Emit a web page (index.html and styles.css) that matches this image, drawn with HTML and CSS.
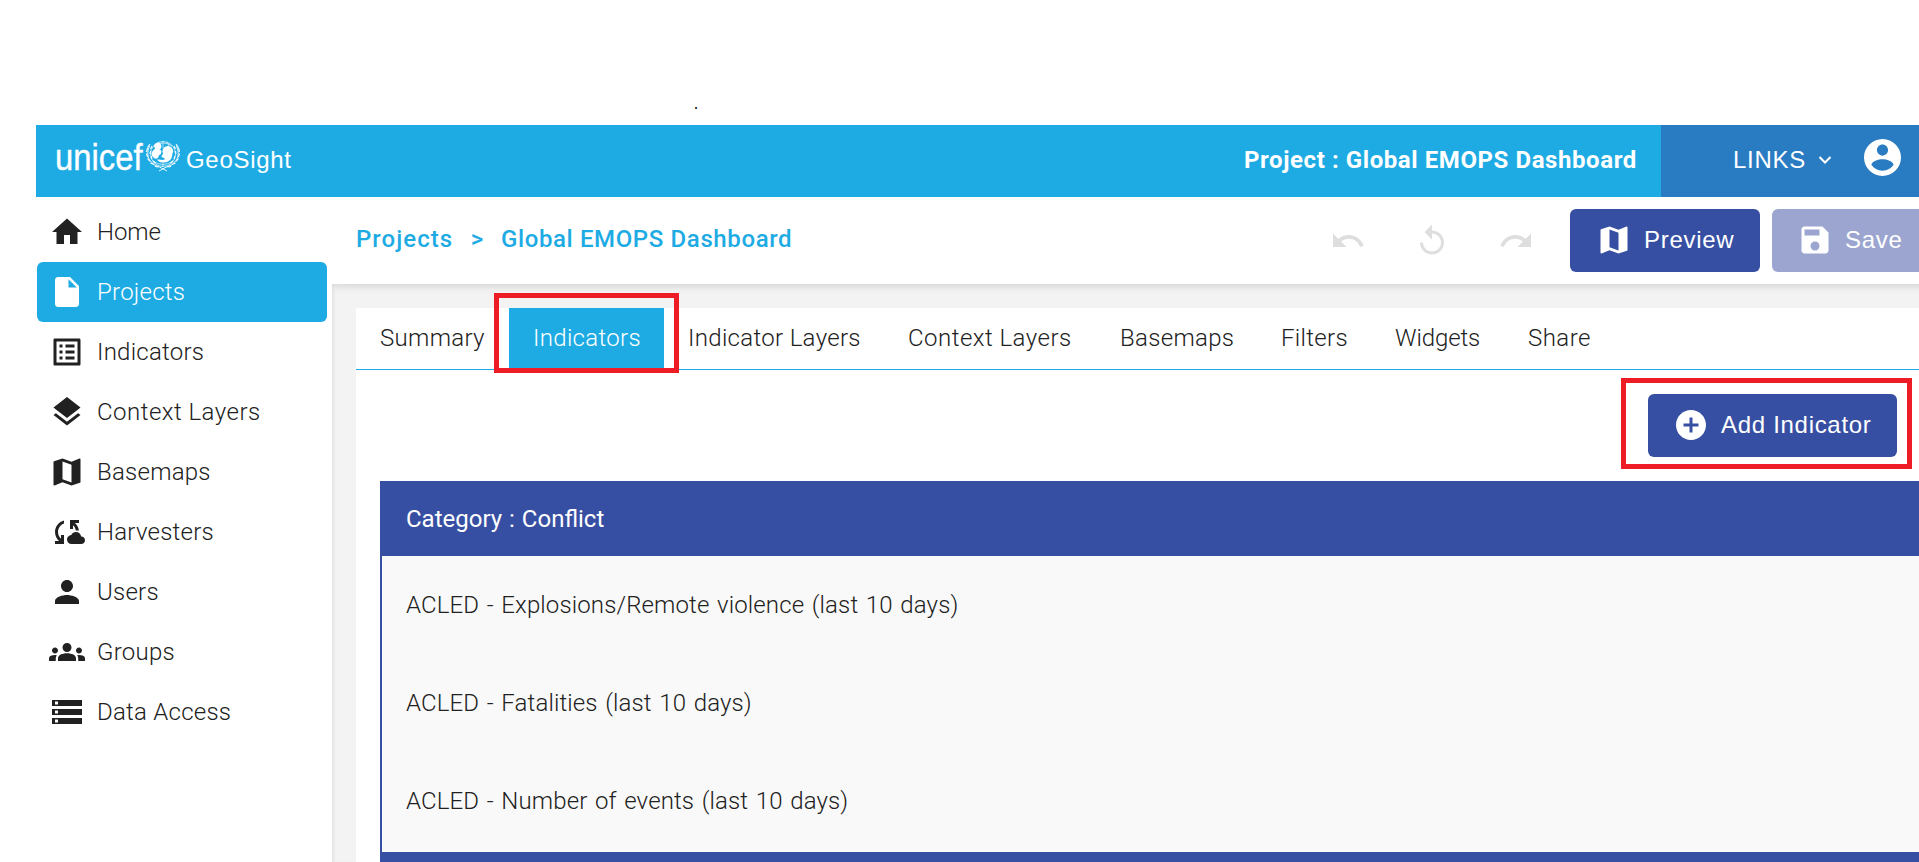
FILE: index.html
```html
<!DOCTYPE html>
<html lang="en">
<head>
<meta charset="utf-8">
<title>GeoSight</title>
<link rel="stylesheet" href="styles.css">
</head>
<body>
<div class="top-space"><span class="dot">.</span></div>
<div class="app">
  <header class="header">
    <div class="brand">
      <svg class="logo" viewBox="0 0 128 40" width="128" height="40">
        <text class="logo-word" x="0" y="32" textLength="87.500" lengthAdjust="spacingAndGlyphs">unicef</text>
        <g fill="none" stroke="#fff">
          <circle cx="108" cy="16" r="12.500" stroke-width="0.7"/>
          <path d="M99 8q9-6 18 0M108 3.500v7M104 4q-1.500 2-1.500 4M112 4q2 3 2 5M98 23q10 7 20 0M108 25v4" stroke-width="0.600"/>
          <path d="M94.500 8q-3.500 8 0 14q4 6 10 7l7.500 4M121.500 8q3.500 8 0 14q-4 6-10 7l-7.500 4" stroke-width="0.900"/>
          <path d="M95 6l-2.500 3.500M92.500 10l-1 4M91.500 15.500l1 3.500M92.500 20.500l2.500 3M95.500 25l3.500 1.500M100 28.500l3.500 .5M97 8l-1.500 3M95.500 13l-.5 3M96 18l1 3M98 23l2.500 2M121 6l2.500 3.500M123.500 10l1 4M124.500 15.500l-1 3.500M123.500 20.500l-2.500 3M120.500 25l-3.500 1.500M116 28.500l-3.500 .5M119 8l1.500 3M120.500 13l.5 3M120 18l-1 3M118 23l-2.500 2" stroke-width="1.100"/>
        </g>
        <g fill="#fff">
          <circle cx="102.800" cy="8.300" r="3.500"/>
          <path d="M100 11q-3.500 2-3.500 5.500q1 3.500 4.500 4.200q2.800-.7 3-3.500q2.500-1 2.500-3.500q-.5-2.700-3.500-2.700z"/>
          <circle cx="112.800" cy="13.200" r="5.300"/>
          <path d="M108.500 15l8.800 1q0 5-3.500 7q-3.500 2.500-9 1l-3-2.300q3-.6 5.500.3l3-.7q-1.500-2-4-2.300q1-2.500 2.200-4z"/>
        </g>
      </svg>
      <span class="product">GeoSight</span>
    </div>
    <div class="project-name"><span>Project : Global EMOPS Dashboard</span></div>
    <div class="links">
      <span class="links-label">LINKS</span>
      <svg class="chevron" viewBox="0 0 14 10" width="14" height="10"><path d="M1.500 2l5.500 5.500L12.500 2" fill="none" stroke="#fff" stroke-width="2"/></svg>
      <svg class="account" viewBox="2 2 20 20" width="37" height="37"><path d="M12 2C6.480 2 2 6.480 2 12s4.480 10 10 10 10-4.480 10-10S17.520 2 12 2zm0 3c1.660 0 3 1.340 3 3s-1.340 3-3 3-3-1.340-3-3 1.340-3 3-3zm0 14.200c-2.500 0-4.710-1.280-6-3.220.030-1.990 4-3.080 6-3.080 1.990 0 5.970 1.090 6 3.080-1.290 1.940-3.500 3.220-6 3.220z"/></svg>
    </div>
  </header>
  <div class="main">
    <nav class="sidebar">
      <a class="item"><svg class="icon" viewBox="0 0 24 24"><path d="M10 20v-6h4v6h5v-8h3L12 3 2 12h3v8z"/></svg><span class="s0">Home</span></a>
      <a class="item active"><svg class="icon" viewBox="0 0 24 24"><path d="M6 2c-1.100 0-1.990.9-1.990 2L4 20c0 1.100.89 2 1.990 2H18c1.100 0 2-.9 2-2V8l-6-6H6zm7 7V3.500L18.500 9H13z"/></svg><span>Projects</span></a>
      <a class="item"><svg class="icon" viewBox="0 0 24 24"><path d="M19 5v14H5V5h14m1.100-2H3.900c-.5 0-.9.4-.9.9v16.200c0 .4.4.9.9.9h16.200c.4 0 .9-.5.9-.9V3.900c0-.5-.5-.9-.9-.9zM11 7h6v2h-6V7zm0 4h6v2h-6v-2zm0 4h6v2h-6zM7 7h2v2H7zm0 4h2v2H7zm0 4h2v2H7z"/></svg><span>Indicators</span></a>
      <a class="item"><svg class="icon" viewBox="0 0 24 24"><path d="M11.990 18.540l-7.370-5.730L3 14.070l9 7 9-7-1.630-1.270-7.380 5.740zM12 16l7.360-5.730L21 9l-9-7-9 7 1.630 1.270L12 16z"/></svg><span class="s5">Context Layers</span></a>
      <a class="item"><svg class="icon" viewBox="0 0 24 24"><path d="M20.500 3l-.16.030L15 5.100 9 3 3.360 4.900c-.21.070-.36.250-.36.480V20.500c0 .28.220.5.5.5l.16-.030L9 18.900l6 2.100 5.640-1.900c.21-.070.36-.25.36-.48V3.500c0-.28-.22-.5-.5-.5zM15 19l-6-2.110V5l6 2.110V19z"/></svg><span>Basemaps</span></a>
      <a class="item"><svg class="icon" viewBox="0 0 24 24"><path d="M21.500 14.980c-.020 0-.030 0-.050.010C21.200 13.300 19.760 12 18 12c-1.400 0-2.600.83-3.160 2.020C13.260 14.100 12 15.400 12 17c0 1.660 1.340 3 3 3l6.500-.020c1.380 0 2.500-1.120 2.500-2.500s-1.120-2.500-2.500-2.500zM10 4.260v2.090C7.670 7.180 6 9.390 6 12c0 1.770.78 3.340 2 4.440V14h2v6H4v-2h2.730C5.060 16.540 4 14.400 4 12c0-3.730 2.550-6.850 6-7.740zM20 6h-2.730c1.430 1.260 2.410 3.010 2.660 5h-2.020c-.23-1.360-.93-2.550-1.910-3.440V10h-2V4h6v2z"/></svg><span>Harvesters</span></a>
      <a class="item"><svg class="icon" viewBox="0 0 24 24"><path d="M12 12c2.210 0 4-1.790 4-4s-1.790-4-4-4-4 1.790-4 4 1.790 4 4 4zm0 2c-2.670 0-8 1.340-8 4v2h16v-2c0-2.660-5.330-4-8-4z"/></svg><span>Users</span></a>
      <a class="item"><svg class="icon" viewBox="0 0 24 24"><path d="M12 12.750c1.630 0 3.070.39 4.240.9 1.080.48 1.760 1.560 1.760 2.730V18H6v-1.610c0-1.180.68-2.260 1.760-2.730 1.170-.52 2.610-.91 4.240-.91zM4 13c1.100 0 2-.9 2-2s-.9-2-2-2-2 .9-2 2 .9 2 2 2zm1.130 1.100c-.37-.06-.74-.1-1.130-.1-.99 0-1.930.21-2.780.58C.48 14.900 0 15.620 0 16.430V18h4.500v-1.610c0-.83.23-1.610.63-2.290zM20 13c1.100 0 2-.9 2-2s-.9-2-2-2-2 .9-2 2 .9 2 2 2zm4 3.430c0-.81-.48-1.530-1.220-1.850-.85-.37-1.790-.58-2.780-.58-.39 0-.76.040-1.130.1.4.68.63 1.460.63 2.290V18H24v-1.570zM12 6c1.660 0 3 1.340 3 3s-1.340 3-3 3-3-1.340-3-3 1.340-3 3-3z"/></svg><span>Groups</span></a>
      <a class="item"><svg class="icon" viewBox="0 0 24 24"><path d="M2 20h20v-4H2v4zm2-3h2v2H4v-2zM2 4v4h20V4H2zm4 3H4V5h2v2zm-4 7h20v-4H2v4zm2-3h2v2H4v-2z"/></svg><span>Data Access</span></a>
    </nav>
    <section class="content">
      <div class="toolbar">
        <div class="crumbs"><span class="crumb-root">Projects</span><span class="sep">&gt;</span><span class="crumb-page">Global EMOPS Dashboard</span></div>
        <div class="history">
          <svg class="icon" viewBox="0 0 24 24"><path d="M12.500 8c-2.650 0-5.050.99-6.900 2.600L2 7v9h9l-3.620-3.620c1.390-1.160 3.160-1.880 5.120-1.880 3.540 0 6.550 2.310 7.600 5.500l2.370-.78C21.080 11.030 17.150 8 12.500 8z"/></svg>
          <svg class="icon" viewBox="0 0 24 24"><path d="M12 5V1L7 6l5 5V7c3.310 0 6 2.690 6 6s-2.690 6-6 6-6-2.690-6-6H4c0 4.420 3.580 8 8 8s8-3.580 8-8-3.580-8-8-8z"/></svg>
          <svg class="icon" viewBox="0 0 24 24"><path d="M18.400 10.600C16.550 8.990 14.150 8 11.500 8c-4.650 0-8.580 3.030-9.960 7.220L3.900 16c1.050-3.190 4.050-5.500 7.600-5.500 1.950 0 3.730.72 5.120 1.880L13 16h9V7l-3.600 3.600z"/></svg>
        </div>
        <button class="btn preview"><svg class="icon" viewBox="0 0 24 24"><path d="M20.500 3l-.16.030L15 5.100 9 3 3.360 4.900c-.21.070-.36.250-.36.480V20.500c0 .28.220.5.5.5l.16-.030L9 18.900l6 2.100 5.640-1.900c.21-.070.36-.25.36-.48V3.500c0-.28-.22-.5-.5-.5zM15 19l-6-2.110V5l6 2.110V19z"/></svg><span>Preview</span></button>
        <button class="btn save"><svg class="icon" viewBox="0 0 24 24"><path d="M17 3H5c-1.110 0-2 .9-2 2v14c0 1.100.89 2 2 2h14c1.100 0 2-.9 2-2V7l-4-4zm-5 16c-1.660 0-3-1.340-3-3s1.340-3 3-3 3 1.340 3 3-1.340 3-3 3zm3-10H5V5h10v4z"/></svg><span>Save</span></button>
      </div>
      <div class="panel">
        <div class="tabs">
          <div class="tab t-summary"><span>Summary</span></div>
          <div class="tab t-indicators selected"><span>Indicators</span><i class="callout callout-tab"></i></div>
          <div class="tab t-ilayers"><span>Indicator Layers</span></div>
          <div class="tab t-clayers"><span class="s5">Context Layers</span></div>
          <div class="tab t-basemaps"><span>Basemaps</span></div>
          <div class="tab t-filters"><span>Filters</span></div>
          <div class="tab t-widgets"><span class="s0">Widgets</span></div>
          <div class="tab"><span class="s5">Share</span></div>
        </div>
        <div class="actions">
          <button class="btn add"><svg class="icon" viewBox="0 0 24 24"><path d="M12 2C6.480 2 2 6.480 2 12s4.480 10 10 10 10-4.480 10-10S17.520 2 12 2zm5 11h-4v4h-2v-4H7v-2h4V7h2v4h4v2z"/></svg><span>Add Indicator</span><i class="callout callout-add"></i></button>
        </div>
        <div class="table">
          <div class="category"><span>Category : Conflict</span></div>
          <div class="row"><span>ACLED - Explosions/Remote violence (last 10 days)</span></div>
          <div class="row"><span>ACLED - Fatalities (last 10 days)</span></div>
          <div class="row last"><span>ACLED - Number of events (last 10 days)</span></div>
          <div class="category"></div>
        </div>
      </div>
    </section>
  </div>
</div>
</body>
</html>
```
FILE: styles.css
```css
* { box-sizing: border-box; }
body {
  margin: 0;
  background: #fff;
  color: #212121;
  font: 300 24px/36px Roboto, sans-serif;
}
.top-space { height: 125px; padding: 94px 0 0 694px; }
.dot { color: #000; font: 16px/20px "Liberation Serif", serif; display: block; }
.app { margin-left: 36px; height: 737px; display: flex; flex-direction: column; overflow: hidden; }
.icon { width: 36px; height: 36px; flex: none; fill: currentColor; display: block; }
.header { height: 72px; flex: none; display: flex; background: #1eabe4; color: #fff; font-family: "Liberation Sans", sans-serif; font-weight: 400; }
.brand { display: flex; padding: 13px 0 0 19px; flex: 1; }
.logo { flex: none; }
.logo-word { font-family: "Liberation Sans", sans-serif; font-size: 37px; fill: #fff; stroke: #fff; stroke-width: 0.4px; }
.product { margin: 4px 0 0 3px; letter-spacing: 0.7px; }
.project-name { font-family: Roboto, sans-serif; font-weight: 700; letter-spacing: 0.58px; padding: 17px 0 0 0; width: 417px; white-space: nowrap; }
.links { width: 258px; background: #297bc2; display: flex; padding: 15px 0 0 72px; }
.links-label { width: 85px; margin-top: 2px; letter-spacing: 0.7px; }
.chevron { margin-top: 15px; }
.account { margin: -1px 0 0 32px; fill: #fff; }
.main { display: flex; flex: 1; min-height: 0; }
.sidebar { width: 296px; padding: 5px 5px 0 1px; flex: none; letter-spacing: 0.25px; }
.item { height: 60px; display: flex; align-items: center; gap: 12px; padding-left: 12px; border-radius: 6px; white-space: nowrap; }
.item.active { background: #1eabe4; color: #fff; }
.s0 { letter-spacing: -0.1px; }
.s5 { letter-spacing: 0.48px; }
.content { flex: 1; min-width: 0; background: #f3f3f3; display: flex; flex-direction: column; box-shadow: inset 4px 0 3px -2px #e4e4e4; }
.toolbar { height: 87px; flex: none; background: #fff; box-shadow: 0 2px 8px rgba(0,0,0,.13), 12px 2px 8px rgba(0,0,0,.01); display: flex; padding: 12px 0 0 24px; clip-path: inset(0 -20px -14px 0); margin-right: -12px; }
.crumbs { flex: 1; color: #1eabe4; font-weight: 500; padding-top: 12px; display: flex; white-space: nowrap; }
.crumb-root { width: 97px; letter-spacing: 1.05px; }
.sep { width: 48px; text-align: center; }
.crumb-page { letter-spacing: 0.62px; }
.history { display: flex; gap: 48px; color: #dedede; padding: 14px 36px 0 0; }
.btn { border: 0; border-radius: 6px; height: 63px; background: #374fa2; color: #fff; display: flex; align-items: center; font: 400 24px/36px "Liberation Sans", sans-serif; letter-spacing: 0.7px; white-space: nowrap; padding: 0 0 1px; position: relative; }
.preview { width: 190px; padding-left: 26px; gap: 12px; margin-right: 12px; }
.save { width: 159px; padding-left: 25px; gap: 12px; background: #9ba5d0; }
.panel { margin: 24px 0 0 24px; background: #fff; flex: 1; }
.tabs { height: 62px; border-bottom: 1px solid #1eabe4; display: flex; align-items: flex-start; letter-spacing: 0.32px; }
.tab { height: 60px; padding: 12px 0 0 24px; position: relative; white-space: nowrap; }
.selected { background: #1eabe4; color: #fff; }
.t-summary { width: 153px; }
.t-indicators { width: 155px; }
.t-ilayers { width: 220px; }
.t-clayers { width: 212px; }
.t-basemaps { width: 161px; }
.t-filters { width: 114px; }
.t-widgets { width: 133px; }
.callout { position: absolute; border: 5px solid #ee1c25; }
.callout-tab { left: -15px; top: -15px; width: 185px; height: 80px; }
.callout-add { left: -27px; top: -16px; width: 291px; height: 91px; }
.actions { display: flex; justify-content: flex-end; padding: 24px 22px 24px 0; }
.add { width: 249px; padding-left: 25px; gap: 12px; }
.table { margin-left: 24px; border-left: 2px solid #374fa2; white-space: nowrap; letter-spacing: 0.13px; word-spacing: 1.6px; }
.category { height: 75px; background: #374fa2; color: #fff; padding: 20px 24px; font-weight: 400; letter-spacing: 0; word-spacing: 1px; }
.row { height: 98px; background: #f9f9f9; padding: 31px 24px; }
.last { height: 100px; }
```
